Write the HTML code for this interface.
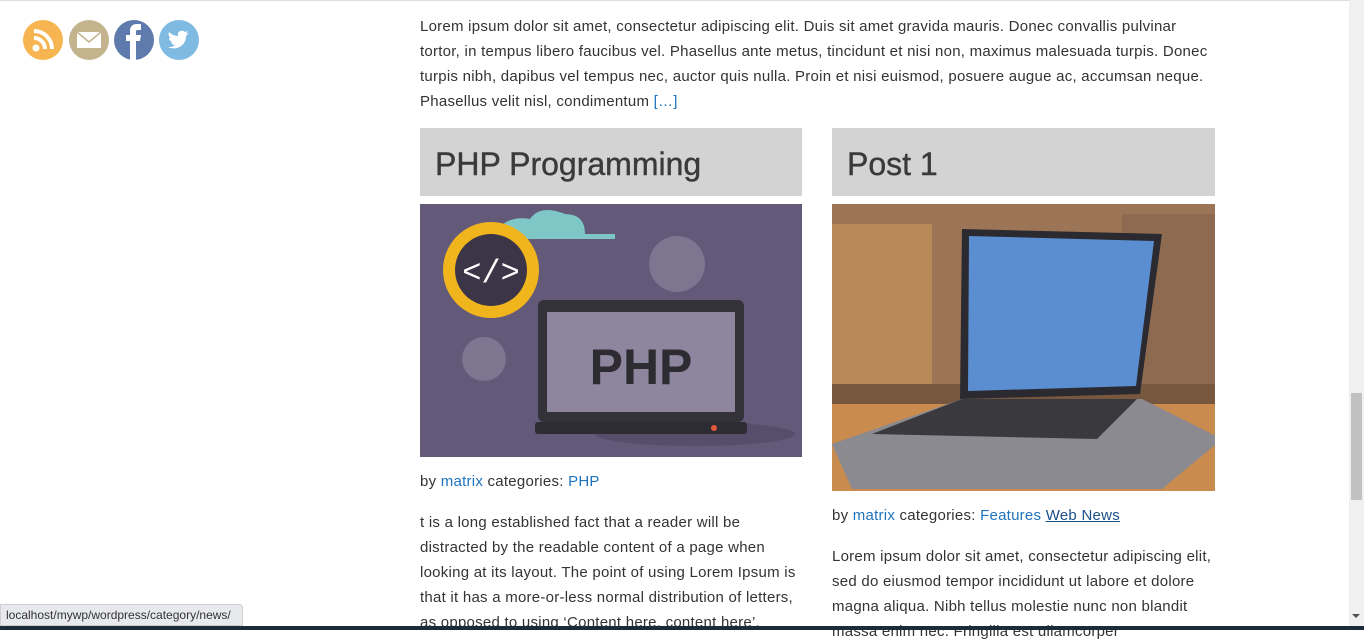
<!DOCTYPE html>
<html><head><meta charset="utf-8"><style>
*{margin:0;padding:0;box-sizing:border-box}
html,body{width:1364px;height:630px;overflow:hidden;background:#fff;font-family:"Liberation Sans",sans-serif;color:#333}
.top{position:absolute;left:0;top:0;width:1349px;height:1px;background:#ddd}
.p{font-size:15px;letter-spacing:0.25px;line-height:25px;color:#333;white-space:nowrap}
a{color:#1e73be;text-decoration:none}
.h{position:absolute;background:#d3d3d3;height:68px;font-size:32px;color:#3a3a3a;padding-left:15px;line-height:72px;-webkit-text-stroke:0.4px #3a3a3a}
.sb{position:absolute;right:0;top:0;width:15px;height:627px;background:#f0f0f0}
</style></head><body>
<div class="top"></div>
<svg style="position:absolute;left:23px;top:19px" width="178" height="42">
<circle cx="20" cy="21" r="20" fill="#f7b552"/><circle cx="13" cy="29" r="3.5" fill="#fff"/>
<path d="M11 19a11 11 0 0 1 11 11M11 12a18 18 0 0 1 18 18" stroke="#fff" stroke-width="4" fill="none"/>
<circle cx="66" cy="21" r="20" fill="#c3b48e"/><rect x="54" y="13" width="24" height="16" fill="#fff"/><path d="M54 13l12 10 12-10" stroke="#c3b48e" stroke-width="1.5" fill="none"/>
<circle cx="111" cy="21" r="20" fill="#5f7aad"/><path d="M107 41V22h-4v-6h4v-4c0-5 3-7 7-7h4v6h-3c-2 0-2 1-2 2v3h5l-1 6h-4v19z" fill="#fff"/>
<circle cx="156" cy="21" r="20" fill="#7fbae2"/><path d="M145 28c8 4 18-1 18-11l3-3-3 1 2-3-3 1c-3-3-8-1-7 4-4 0-7-2-9-4-1 3 0 5 2 6h-2c0 2 2 4 4 4h-2c1 2 2 3 4 3-2 2-4 2-7 2z" fill="#fff"/>
</svg>
<div class="p" style="position:absolute;left:420px;top:14px">Lorem ipsum dolor sit amet, consectetur adipiscing elit. Duis sit amet gravida mauris. Donec convallis pulvinar<br>tortor, in tempus libero faucibus vel. Phasellus ante metus, tincidunt et nisi non, maximus malesuada turpis. Donec<br>turpis nibh, dapibus vel tempus nec, auctor quis nulla. Proin et nisi euismod, posuere augue ac, accumsan neque.<br>Phasellus velit nisl, condimentum <a>[…]</a></div>
<div class="h" style="left:420px;top:128px;width:382px">PHP Programming</div>
<div class="h" style="left:832px;top:128px;width:383px">Post 1</div>
<svg style="position:absolute;left:420px;top:204px" width="382" height="253">
<rect width="382" height="253" fill="#625a78"/>
<ellipse cx="275" cy="230" rx="100" ry="12" fill="#564e6a"/>
<path d="M70 40q10-30 40-25 10-15 35-5 20 0 20 20h30v5H70z" fill="#7fc6c7"/>
<circle cx="71" cy="66" r="48" fill="#f0b41c"/><circle cx="71" cy="66" r="36" fill="#3c3548"/>
<text x="71" y="78" text-anchor="middle" font-size="32" fill="#fff" font-family="Liberation Mono">&lt;/&gt;</text>
<circle cx="257" cy="60" r="28" fill="#7d7690"/><circle cx="64" cy="155" r="22" fill="#7d7690"/>
<rect x="118" y="96" width="206" height="122" rx="6" fill="#333238"/>
<rect x="127" y="108" width="188" height="100" fill="#8e859f"/>
<text x="221" y="180" text-anchor="middle" font-size="50" font-weight="bold" fill="#2e2c33">PHP</text>
<rect x="115" y="218" width="212" height="12" rx="3" fill="#2e2c33"/><circle cx="294" cy="224" r="3" fill="#e05a3a"/>
</svg>
<svg style="position:absolute;left:832px;top:204px" width="383" height="287">
<defs><linearGradient id="g" x1="0" y1="0" x2="0" y2="1"><stop offset="0" stop-color="#8a6a4e"/><stop offset="1" stop-color="#6e4e37"/></linearGradient></defs>
<rect width="383" height="287" fill="url(#g)"/>
<rect x="0" y="0" width="383" height="180" fill="#9c7556"/>
<rect x="0" y="20" width="100" height="160" fill="#b88a57"/><rect x="290" y="10" width="93" height="170" fill="#8e6b50"/>
<path d="M0 200h383v87H0z" fill="#c98b4e"/>
<path d="M130 25l200 5-22 160-180 5z" fill="#2a2a30"/>
<path d="M137 32l185 5-18 145-168 5z" fill="#5b8ed0"/>
<path d="M0 240l130-45 180 0 80 40-60 50H20z" fill="#8a8a90"/>
<path d="M40 230l90-35 175 0-40 40z" fill="#3a3a3e"/>
</svg>
<div class="p" style="position:absolute;left:420px;top:469px">by <a>matrix</a> categories: <a>PHP</a></div>
<div class="p" style="position:absolute;left:832px;top:503px">by <a>matrix</a> categories: <a>Features</a> <a style="text-decoration:underline;color:#1a4f8a">Web News</a></div>
<div class="p" style="position:absolute;left:420px;top:510px">t is a long established fact that a reader will be<br>distracted by the readable content of a page when<br>looking at its layout. The point of using Lorem Ipsum is<br>that it has a more-or-less normal distribution of letters,<br>as opposed to using ‘Content here, content here’,</div>
<div class="p" style="position:absolute;left:832px;top:544px">Lorem ipsum dolor sit amet, consectetur adipiscing elit,<br>sed do eiusmod tempor incididunt ut labore et dolore<br>magna aliqua. Nibh tellus molestie nunc non blandit<br>massa enim nec. Fringilla est ullamcorper</div>
<div class="sb"><div style="position:absolute;left:2px;top:393px;width:11px;height:107px;background:#c1c1c1"></div><div style="position:absolute;left:3px;top:614px;border-left:4px solid transparent;border-right:4px solid transparent;border-top:4px solid #505050"></div></div>
<div style="position:absolute;left:0;top:626px;width:1364px;height:4px;background:#1c2b3a"></div>
<div style="position:absolute;left:0;top:604px;width:243px;height:22px;background:#e8e9ec;border:1px solid #d0d0d4;border-radius:0 4px 0 0;font-size:12px;line-height:20px;padding-left:5px;color:#333">localhost/mywp/wordpress/category/news/</div>
</body></html>
